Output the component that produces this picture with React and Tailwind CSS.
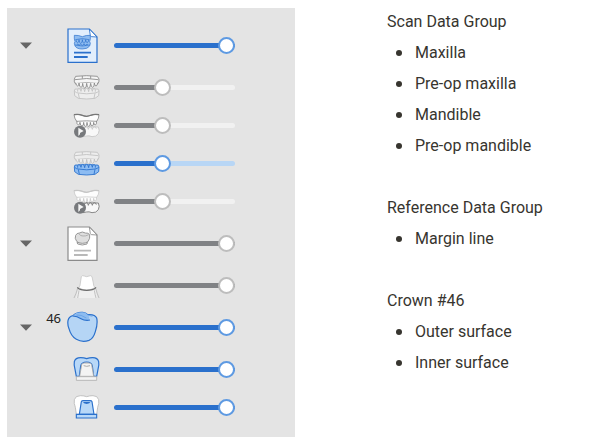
import React, { useState } from "react";

const BLUE = "#2a70cc";

// ===========================
// ICONS
// ===========================
const UpperArch = ({ stroke, fill }) => (
  <g stroke={stroke} fill={fill} strokeWidth="2.6" strokeLinejoin="round">
    <path d="M8 4 Q41 0 73 4 L78 12 Q79 22 74 27 L70 25 Q41 20 12 25 L8 27 Q2 22 4 12 Z" />
    <path d="M6 14 Q41 7 76 14 M28 3 V11 M53 3 V11" fill="none" />
    <path d="M8 23 q2 10 6 10 q4 0 4 -9 q1 13 6 13 q5 0 5 -12 q1 14 6 14 q6 0 6 -14 q1 14 6 14 q5 0 6 -14 q1 12 6 12 q5 0 5 -13 q1 9 5 9 q4 0 5 -10" />
  </g>
);

const LowerArch = ({ stroke, fill }) => (
  <g stroke={stroke} fill={fill} strokeWidth="2.6" strokeLinejoin="round">
    <path d="M4 48 Q3 40 13 42 Q41 38 68 42 Q78 40 78 48 L77 62 L66 70 Q41 74 16 70 L5 62 Z" />
    <path d="M5 49 Q10 54 16 54 Q41 59 66 54 Q73 53 77 49 M16 55 L19 70 M66 55 L63 70" fill="none" />
    <path d="M14 50 q-2 -9 4 -9 q5 0 6 8 q0 -9 5 -9 q5 0 6 10 q0 -10 6 -10 q5 0 6 10 q0 -10 5 -10 q5 0 6 9 q0 -8 5 -8 q6 0 4 9" />
  </g>
);

const ArchesIcon = ({ upper, lower }) => (
  <svg width="27" height="25" viewBox="0 0 81 75" aria-hidden="true">
    <LowerArch {...lower} />
    <UpperArch {...upper} />
  </svg>
);

const PreOpIcon = ({ upper, lower }) => (
  <svg width="27" height="25" viewBox="0 0 81 75" aria-hidden="true">
    <g stroke={lower} fill="#f8f8f8" strokeWidth="2.6" strokeLinejoin="round">
      <path d="M12 44 Q41 40 76 42 Q81 52 76 62 Q70 72 57 71 Q48 67 40 69 L30 71 Z" />
      <path d="M34 48 q0 -7 6 -7 q5 0 6 8 q1 -8 6 -8 q5 0 6 8 q1 -8 6 -8 q5 0 6 6" fill="none" />
    </g>
    <g stroke={upper} fill="#fdfdfd" strokeWidth="2.2" strokeLinejoin="round">
      <path d="M11 21 q0 15 5 15 q4 0 5 -8 q1 11 6 11 q5 0 5 -11 q1 12 5 12 q5 0 5 -12 q1 12 5 12 q5 0 5 -12 q1 11 5 11 q5 0 5 -11 q1 8 5 8 q4 0 4 -15" />
      <path d="M3 5 Q18 3 28 7 Q41 13 53 7 Q63 3 78 5 Q78 16 71 25 Q41 22 11 25 Q4 16 3 5 Z" />
      <path d="M3 5 Q18 3 28 7 Q41 13 53 7 Q63 3 78 5" fill="none" strokeWidth="3.6" />
    </g>
    <circle cx="21" cy="56" r="18" fill="#77797c" />
    <path d="M16 44 V69 L21 64 V60 L32 54 Z" fill="#f4f4f4" />
  </svg>
);

const DocumentIcon = ({ stroke, fill, line, children }) => (
  <svg width="31" height="35" viewBox="0 0 93 105" aria-hidden="true">
    <path d="M3 3 H67 L90 27 V103 H3 Z" fill={fill} stroke={stroke} strokeWidth="3.6" />
    <path d="M67 3 L70 23 Q71 26 74 26 L90 27 Z" fill="#fff" stroke={stroke} strokeWidth="2.6" strokeLinejoin="round" />
    {children}
    <path d="M21 74 H72 M21 87 H62" stroke={line} strokeWidth="5.4" />
  </svg>
);

const ScanDocument = () => (
  <DocumentIcon stroke={BLUE} fill="#e2eefc" line={BLUE}>
    <g stroke={BLUE} fill="#8fbcf0" strokeWidth="2" strokeLinejoin="round">
      <path d="M22 22 Q34 21 46 26 Q58 21 70 22 Q71 34 68 41 Q72 44 68 54 Q62 63 46 63 Q29 63 24 54 Q20 44 24 41 Q21 34 22 22 Z" />
      <path d="M25 35 Q46 29 67 35 M24 51 Q46 57 68 51" fill="none" />
      <path d="M27 36 q1 8 5 8 q4 0 4 -9 q1 11 5 11 q5 0 5 -11 q1 11 5 11 q4 0 5 -11 q1 9 4 9 q4 0 5 -8 M29 51 q4 -7 7 1 q4 -7 10 0 q5 -7 10 0 q4 -7 7 -2" fill="none" />
    </g>
  </DocumentIcon>
);

const ReferenceDocument = () => (
  <DocumentIcon stroke="#8b8b8b" fill="#fff" line="#b9b9b9">
    <g stroke="#8a8a8a" fill="#dedede" strokeWidth="2.6" strokeLinejoin="round">
      <path d="M30 49 Q46 45 61 49 L60 54 Q46 60 32 54 Z" fill="#f0f0f0" />
      <path d="M26 28 Q29 21 37 21 Q46 15 55 21 Q64 20 68 26 Q70 37 63 47 Q56 52 46 52 Q34 52 29 46 Q22 37 26 28 Z" />
      <path d="M35 22 Q40 31 48 30 Q56 31 65 26" fill="none" stroke="#a8a8a8" />
    </g>
  </DocumentIcon>
);

const MarginIcon = () => (
  <svg width="27" height="25" viewBox="0 0 81 75" aria-hidden="true">
    <path d="M15 46 Q41 58 67 46 L73 75 H9 Z" fill="#efefef" />
    <path d="M17 44 Q22 40 22 30 L25 11 Q28 6 34 9 Q41 13 48 9 Q54 6 57 11 L61 30 Q61 40 66 44 Q41 58 17 44 Z" fill="#fff" stroke="#c8c8c8" strokeWidth="2.6" />
    <path d="M14 46 Q10 61 3 75 M18 52 Q16 64 14 75 M68 46 Q72 61 78 75 M64 52 Q66 64 69 75" fill="none" stroke="#b5b5b5" strokeWidth="2.4" />
    <path d="M13 43 Q16 48 24 50 Q41 54 58 50 Q66 48 69 43" fill="none" stroke="#6a6a6a" strokeWidth="3.6" />
  </svg>
);

const CrownIcon = () => (
  <svg width="31" height="35" viewBox="0 0 93 105" aria-hidden="true">
    <g stroke={BLUE} strokeWidth="3.6" strokeLinejoin="round">
      <path d="M3 32 Q5 20 18 17 Q28 6 45 7 Q55 6 62 14 Q84 12 89 24 Q93 40 85 65 Q79 86 66 91 Q46 98 28 88 Q12 79 6 56 Q1 44 3 32 Z" fill="#b5d5f5" />
      <path d="M18 17 Q28 6 45 7 Q55 6 62 14 Q68 20 67 29 Q56 33 44 27 Q31 20 18 19 Z" fill="#8dbcf0" stroke="none" />
      <path d="M18 18 Q30 19 42 26 Q54 33 69 30" fill="none" />
      <path d="M62 14 Q66 17 76 19 M28 15 Q42 13 58 24" fill="none" stroke="#5c98e0" strokeWidth="2" />
    </g>
  </svg>
);

const OuterSurfaceIcon = () => (
  <svg width="27" height="25" viewBox="0 0 81 75" aria-hidden="true">
    <path d="M4 14 Q7 2 23 2 Q33 2 41 5 Q49 2 59 2 Q74 2 77 14 Q79 25 75 37 L71 58 H62 Q60 42 58 27 Q56 15 41 15 Q25 15 23 27 Q21 42 19 58 H10 L6 37 Q2 25 4 14 Z" fill="#b8d8f8" stroke={BLUE} strokeWidth="3.6" strokeLinejoin="round" />
    <path d="M20 58 L26 23 Q28 18 34 18 H48 Q54 18 56 23 L62 58 Z" fill="#f3f3f3" stroke="#a5a5a5" strokeWidth="2.6" />
    <path d="M32 26 Q41 30 51 26" fill="none" stroke="#aaa" strokeWidth="3" />
    <path d="M10 59 H71 V70 H10 Z" fill="#f3f3f3" stroke="#b0b0b0" strokeWidth="2.6" />
  </svg>
);

const InnerSurfaceIcon = () => (
  <svg width="27" height="25" viewBox="0 0 81 75" aria-hidden="true">
    <path d="M4 14 Q7 2 22 2 Q33 2 41 5 Q49 2 60 2 Q74 2 77 14 Q79 25 74 37 L71 58 H10 L7 37 Q2 25 4 14 Z" fill="#fff" stroke="#bdbdbd" strokeWidth="2.8" />
    <path d="M19 58 L25 20 Q26 17 31 17 H51 Q56 17 57 20 L63 58 Z" fill="#b8d8f8" stroke={BLUE} strokeWidth="3.4" />
    <path d="M30 21 H52 Q51 26 41 27 Q31 26 30 21 Z" fill={BLUE} />
    <path d="M10 58 H71 V69 H10 Z" fill="#b8d8f8" stroke={BLUE} strokeWidth="3.4" />
  </svg>
);

// ===========================
// DATA
// ===========================
const dark = { stroke: "#8a8a8a", fill: "#f5f5f5" };
const light = { stroke: "#c0c0c0", fill: "#ededed" };
const blue = { stroke: BLUE, fill: "#8dbcf2" };

const GROUPS = [
  {
    title: "Scan Data Group",
    icon: <ScanDocument />,
    value: 100,
    active: true,
    items: [
      { name: "Maxilla", icon: <ArchesIcon upper={dark} lower={light} />, value: 38 },
      { name: "Pre-op maxilla", icon: <PreOpIcon upper="#777" lower="#c6c6c6" />, value: 38 },
      { name: "Mandible", icon: <ArchesIcon upper={light} lower={blue} />, value: 38, active: true },
      { name: "Pre-op mandible", icon: <PreOpIcon upper="#c6c6c6" lower="#777" />, value: 38 },
    ],
  },
  {
    title: "Reference Data Group",
    icon: <ReferenceDocument />,
    value: 100,
    items: [{ name: "Margin line", icon: <MarginIcon />, value: 100 }],
  },
  {
    title: "Crown #46",
    tooth: "46",
    icon: <CrownIcon />,
    value: 100,
    active: true,
    items: [
      { name: "Outer surface", icon: <OuterSurfaceIcon />, value: 100, active: true },
      { name: "Inner surface", icon: <InnerSurfaceIcon />, value: 100, active: true },
    ],
  },
];

// ===========================
// SLIDER
// ===========================
const OpacitySlider = ({ label, initial, active }) => {
  const [value, setValue] = useState(initial);

  const tone = active
    ? "[--on:#2a70cc] [--off:#b8d6f5] [--ring:#5e9ae2]"
    : "[--on:#808285] [--off:#f1f1f1] [--ring:#bdbdbd]";

  return (
    <input
      type="range"
      aria-label={label}
      value={value}
      onChange={(e) => setValue(Number(e.target.value))}
      style={{ "--value": `${value}%` }}
      className={`${tone} block h-[17px] min-w-0 flex-1 appearance-none bg-transparent [&::-webkit-slider-runnable-track]:h-[5px] [&::-webkit-slider-runnable-track]:rounded-full [&::-webkit-slider-runnable-track]:bg-[linear-gradient(to_right,var(--on)_var(--value),var(--off)_var(--value))] [&::-webkit-slider-thumb]:-mt-[6px] [&::-webkit-slider-thumb]:size-[17px] [&::-webkit-slider-thumb]:appearance-none [&::-webkit-slider-thumb]:rounded-full [&::-webkit-slider-thumb]:border-2 [&::-webkit-slider-thumb]:border-[var(--ring)] [&::-webkit-slider-thumb]:bg-white`}
    />
  );
};

const GroupRow = ({ group, open, onToggle }) => (
  <div className="flex h-[45px] items-center">
    <button type="button" aria-label={`Toggle ${group.title}`} aria-expanded={open} onClick={onToggle}>
      <svg width="12" height="7" viewBox="0 0 12 7" className={open ? "" : "-rotate-90"}>
        <path d="M0 0.5 H12 L6 6.8 Z" fill="#666" />
      </svg>
    </button>
    <span className="w-[35px] pr-1.5 pb-5 text-right font-['Noto_Sans',sans-serif] text-[13px] leading-4 text-[#222]">
      {group.tooth}
    </span>
    <span className="mr-3.5 flex w-[33px]">{group.icon}</span>
    <OpacitySlider label={group.title} initial={group.value} active={group.active} />
  </div>
);

const ItemRow = ({ item }) => (
  <div className="flex h-[37px] items-center pl-[47px]">
    <span className="mr-3.5 flex w-[33px] justify-end">{item.icon}</span>
    <OpacitySlider label={item.name} initial={item.value} active={item.active} />
  </div>
);

const App = () => {
  const [closed, setClosed] = useState({});

  return (
    <div className="flex bg-white">
      {/* GROUP PANEL */}
      <section className="mt-2 ml-[7px] flex w-72 shrink-0 flex-col gap-px bg-[#e4e4e4] pt-[15px] pr-[60px] pb-[11px] pl-[13px]">
        {GROUPS.map((group) => (
          <React.Fragment key={group.title}>
            <GroupRow
              group={group}
              open={!closed[group.title]}
              onToggle={() => setClosed({ ...closed, [group.title]: !closed[group.title] })}
            />
            {!closed[group.title] &&
              group.items.map((item) => <ItemRow key={item.name} item={item} />)}
          </React.Fragment>
        ))}
      </section>

      {/* LEGEND */}
      <section className="ml-[92px] flex flex-1 flex-col gap-[31px] pt-1.5 font-[Roboto,sans-serif] text-base leading-[31px] text-[#37352f]">
        {GROUPS.map((group) => (
          <div key={group.title}>
            <h2>{group.title}</h2>
            <ul>
              {group.items.map((item) => (
                <li key={item.name} className="flex items-center pl-[9px]">
                  <span className="mr-[13px] size-1.5 rounded-full bg-[#37352f]" />
                  {item.name}
                </li>
              ))}
            </ul>
          </div>
        ))}
      </section>
    </div>
  );
};

export default App;
